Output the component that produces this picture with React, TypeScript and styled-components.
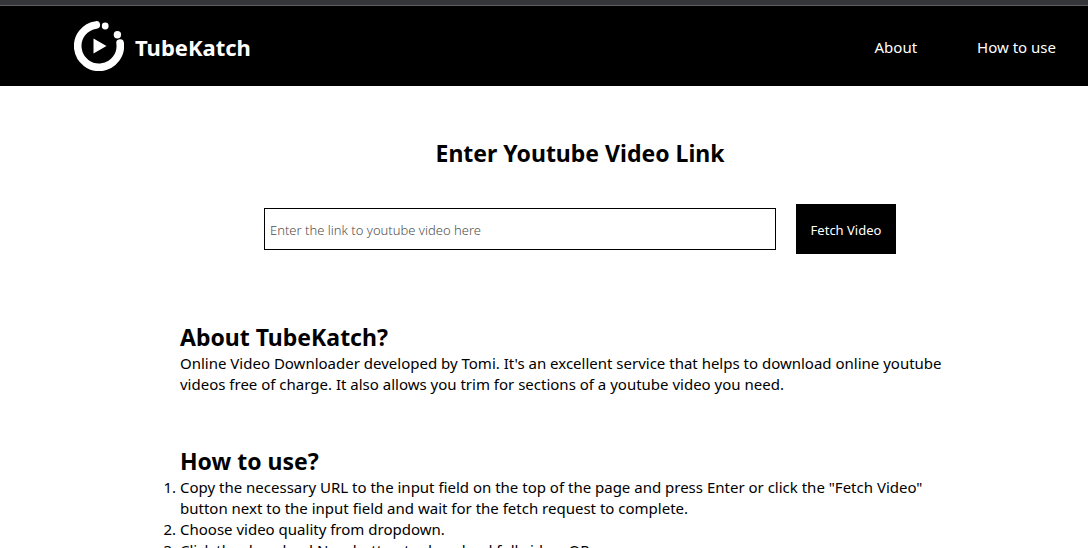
import React from "react";
import styled, { createGlobalStyle } from "styled-components";

const GlobalStyle = createGlobalStyle`
  * { box-sizing: border-box; margin: 0; padding: 0; }
  html, body { background: #fff; }
  html { overflow: hidden; }
  body {
    color: #000;
    font-family: "Noto Sans", "Open Sans", sans-serif;
    font-size: 15px;
    line-height: 21px;
  }
`;

const TopStrip = styled.div`
  height: 6px;
  background: #35363a;
  border-bottom: 1px solid #5f6063;
`;

const Header = styled.header`
  display: flex;
  align-items: center;
  justify-content: space-between;
  height: 80px;
  padding: 0 32px 0 74px;
  background: #000;
  color: #fff;
`;

const Brand = styled.a`
  display: flex;
  align-items: center;
  gap: 11px;
  color: inherit;
  font-size: 22px;
  font-weight: 700;
  line-height: 32px;
  text-decoration: none;
`;

const BrandName = styled.span`
  padding-top: 2px;
`;

const Logo = styled.svg`
  display: block;
  width: 50px;
  height: 50px;
`;

const Nav = styled.nav`
  display: flex;
  gap: 60px;
  padding-top: 2px;
`;

const NavLink = styled.a`
  color: inherit;
  text-decoration: none;
`;

const Main = styled.main`
  padding: 51px 108px 0 180px;
`;

const Heading = styled.h2<{ $centered?: boolean }>`
  font-size: 23px;
  font-weight: 700;
  line-height: 32px;
  text-align: ${({ $centered }) => ($centered ? "center" : "left")};
`;

const FetchForm = styled.form`
  display: flex;
  align-items: center;
  gap: 20px;
  margin-top: 35px;
  padding: 0 84px;
`;

const LinkInput = styled.input`
  flex: 1;
  min-width: 0;
  height: 42px;
  padding: 2px 5px 0;
  border: 1px solid #000;
  border-radius: 0;
  background: #fff;
  font: inherit;
  font-size: 13px;
  &::placeholder { color: #505050; font-weight: 300; opacity: 1; }
`;

const FetchButton = styled.button`
  width: 100px;
  height: 50px;
  padding-top: 2px;
  border: 0;
  background: #000;
  color: #fff;
  font: inherit;
  font-size: 13px;
`;

const Section = styled.section<{ $first?: boolean }>`
  margin-top: ${({ $first }) => ($first ? 67 : 50)}px;
`;

const Steps = styled.ol`
  padding-right: 20px;
  list-style: decimal outside;
`;

export default function App() {
  return (
    <>
      <GlobalStyle />
      <TopStrip />
      <Header>
        <Brand href="#">
          <Logo viewBox="0 0 50 50" aria-hidden="true">
            <path d="M22.300 3.900A21.300 21.300 0 1 0 46.100 22" fill="none" stroke="#fff" strokeWidth="7.600" strokeLinecap="round" />
            <circle cx="31.200" cy="5" r="3.400" fill="#fff" />
            <circle cx="43.400" cy="13.800" r="3.700" fill="#fff" />
            <path d="M19.500 17.500 32.500 25 19.500 32.500Z" fill="#fff" />
          </Logo>
          <BrandName>TubeKatch</BrandName>
        </Brand>
        <Nav>
          <NavLink href="#about">About</NavLink>
          <NavLink href="#how-to-use">How to use</NavLink>
        </Nav>
      </Header>
      <Main>
        <Heading $centered>Enter Youtube Video Link</Heading>
        <FetchForm onSubmit={(e) => e.preventDefault()}>
          <LinkInput type="text" aria-label="Youtube video link" placeholder="Enter the link to youtube video here" />
          <FetchButton type="submit">Fetch Video</FetchButton>
        </FetchForm>
        <Section id="about" $first>
          <Heading>About TubeKatch?</Heading>
          <p>
            Online Video Downloader developed by Tomi. It's an excellent service that helps to download online youtube
            videos free of charge. It also allows you trim for sections of a youtube video you need.
          </p>
        </Section>
        <Section id="how-to-use">
          <Heading>How to use?</Heading>
          <Steps>
            <li>
              Copy the necessary URL to the input field on the top of the page and press Enter or click the "Fetch
              Video" button next to the input field and wait for the fetch request to complete.
            </li>
            <li>Choose video quality from dropdown.</li>
            <li>Click the download Now button to download full video. OR</li>
          </Steps>
        </Section>
      </Main>
    </>
  );
}
